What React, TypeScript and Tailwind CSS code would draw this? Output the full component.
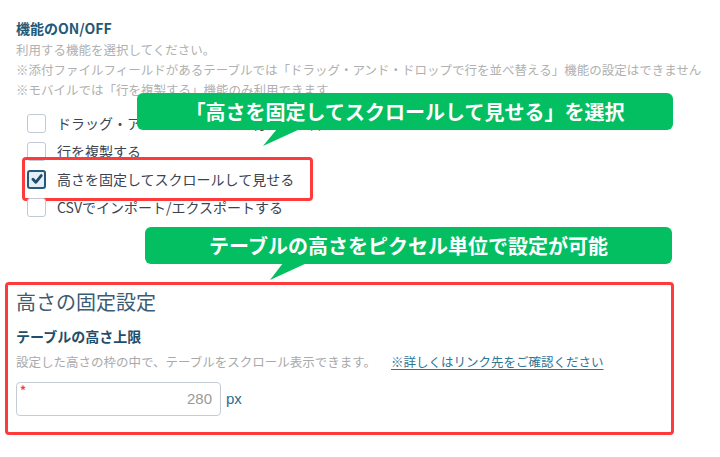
import React from "react";

const jp = { fontFamily: '"Noto Sans CJK JP", "Noto Sans", sans-serif' };

type Item = { label: string; checked?: boolean; marked?: boolean };

const items: Item[] = [
  { label: "ドラッグ・アンド・ドロップで行を並べ替える" },
  { label: "行を複製する" },
  { label: "高さを固定してスクロールして見せる", checked: true, marked: true },
  { label: "CSVでインポート/エクスポートする" },
];

const Checkbox = ({ checked }: { checked?: boolean }) =>
  checked ? (
    <span className="flex h-[19px] w-[19px] items-center justify-center rounded-[3px] border-2 border-[#24597a] bg-[#e4eef6]">
      <svg width="12" height="12" viewBox="0 0 12 12">
        <path d="M2 6.3 L4.8 9.3 L10.2 2.6" fill="none" stroke="#1f4d6b" strokeWidth="2.8" strokeLinecap="round" strokeLinejoin="round" />
      </svg>
    </span>
  ) : (
    <span className="h-[19px] w-[19px] rounded-[3px] border-[1.5px] border-[#c3c9d4] bg-white" />
  );

const Callout = ({ text, className, tail }: { text: string; className: string; tail: string }) => (
  <div className={`absolute ${className}`}>
    <div className="flex h-[37px] items-center justify-center rounded-[6px] bg-[#03bf62] text-[20px] font-bold text-white">
      {text}
    </div>
    <svg className="absolute left-0 top-[36px]" width="200" height="20">
      <polygon points={tail} fill="#03bf62" />
    </svg>
  </div>
);

export default function App() {
  return (
    <div className="relative h-[457px] w-[720px] overflow-hidden bg-white px-[5px]" style={jp}>
      <div className="pl-[11px] pt-[18px]">
        <h2 className="text-[14px] font-bold leading-[20px] text-[#235877]">機能のON/OFF</h2>
        <div className="mt-[2px] whitespace-nowrap text-[12.5px] leading-[20px] text-[#b0b0b0]">
          <p>利用する機能を選択してください。</p>
          <p>※添付ファイルフィールドがあるテーブルでは「ドラッグ・アンド・ドロップで行を並べ替える」機能の設定はできません</p>
          <p>※モバイルでは「行を複製する」機能のみ利用できます</p>
        </div>
        <ul className="mt-[9px] pl-[11px]">
          {items.map((it) => (
            <li key={it.label} className="relative flex h-[28px] items-center gap-[11px]">
              <Checkbox checked={it.checked} />
              <span className="whitespace-nowrap text-[14px] text-[#3a4452]">{it.label}</span>
              {it.marked && (
                <span className="absolute left-[-5px] top-[-8px] h-[44px] w-[291px] rounded-[4px] border-[3px] border-[#ff3a3a]" />
              )}
            </li>
          ))}
        </ul>
      </div>

      <section className="mt-[61px] h-[153px] w-[669px] rounded-[4px] border-[3px] border-[#ff3a3a] pl-2 pt-[3px]">
        <h3 className="text-[20px] leading-[28px] text-[#3b5c73]">高さの固定設定</h3>
        <h4 className="mt-[10px] text-[14px] font-bold leading-[20px] text-[#1f4e6c]">テーブルの高さ上限</h4>
        <p className="mt-[6px] whitespace-nowrap text-[12.5px] leading-[20px] text-[#a9a9a9]">
          設定した高さの枠の中で、テーブルをスクロール表示できます。
          <a className="ml-[15px] text-[#2d7594] underline underline-offset-2">※詳しくはリンク先をご確認ください</a>
        </p>
        <div className="mt-[10px] flex items-center gap-[5px]">
          <div className="relative flex h-[34px] w-[205px] items-center justify-end rounded-[4px] border border-[#c5ccd5] pr-[8px]">
            <span className="absolute left-[3px] top-[1px] text-[12px] font-bold leading-[12px] text-[#f04040]">*</span>
            <span className="text-[15px] text-[#9a9a9a]" style={{ fontFamily: '"Liberation Sans", sans-serif' }}>280</span>
          </div>
          <span className="text-[15px] text-[#2a6d8c]" style={{ fontFamily: '"Liberation Sans", sans-serif' }}>px</span>
        </div>
      </section>

      <Callout
        text="「高さを固定してスクロールして見せる」を選択"
        className="left-[137px] top-[93px] w-[536px]"
        tail="140,0 163,0 126,17"
      />
      <Callout
        text="テーブルの高さをピクセル単位で設定が可能"
        className="left-[145px] top-[227px] w-[527px]"
        tail="138,0 162,0 125,17"
      />
    </div>
  );
}
